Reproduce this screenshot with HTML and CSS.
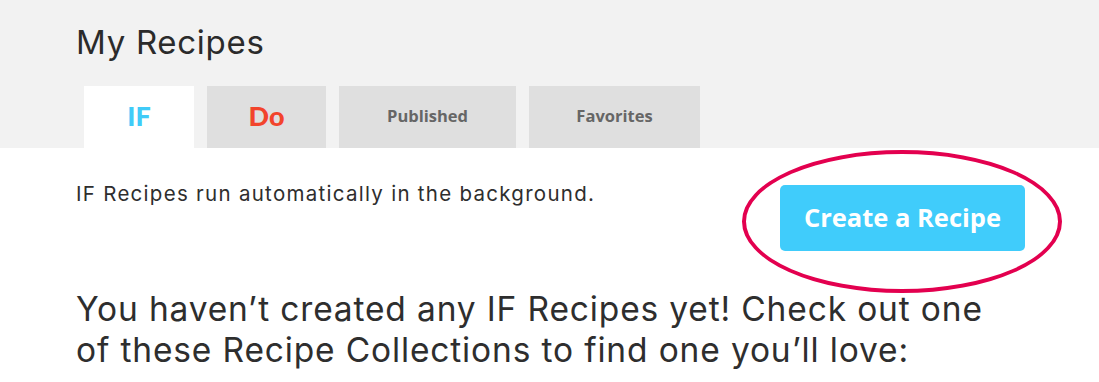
FILE: index.html
```html
<!DOCTYPE html>
<html>
<head>
<meta charset="utf-8">
<link rel="stylesheet" href="styles.css">
</head>
<body>
<header class="top">
  <h1 class="title">My Recipes</h1>
  <nav class="tabs">
    <div class="tab tab-if active">IF</div>
    <div class="tab tab-do">Do</div>
    <div class="tab tab-pub">Published</div>
    <div class="tab tab-fav">Favorites</div>
  </nav>
</header>
<main class="content">
  <div class="row">
    <p class="intro">IF Recipes run automatically in the background.</p>
    <div class="btn-wrap">
      <a class="create-btn">Create a Recipe</a>
      <span class="circle"></span>
    </div>
  </div>
  <p class="empty">You haven’t created any IF Recipes yet! Check out one of these Recipe Collections to find one you’ll love:</p>
</main>
</body>
</html>
```
FILE: styles.css
```css
* { box-sizing: border-box; }
html, body { margin: 0; padding: 0; background: #fff; }
body { font-family: Inter, Lato, sans-serif; color: #333; overflow: hidden; width: 1099px; height: 382px; }
.top { background: #f2f2f2; height: 148px; padding: 20px 0 0 76px; display: flex; flex-direction: column; }
.title { margin: 0; font-weight: 400; font-size: 33px; letter-spacing: 0.7px; line-height: 44px; color: #2b2b2b; }
.tabs { display: flex; gap: 13px; margin-top: 22px; padding-left: 8px; }
.tab { height: 62px; display: flex; align-items: center; justify-content: center; background: #dfdfdf; font-family: "Open Sans", sans-serif; font-weight: 700; font-size: 16.5px; color: #666; padding-bottom: 3px; }
.tab-if, .tab-do { font-family: Lato, sans-serif; font-weight: 900; font-size: 27px; padding-bottom: 4px; }
.tab-if { width: 110px; background: #fff; color: #40cbf8; }
.tab-do { width: 119px; color: #f2442c; }
.tab-pub { width: 177px; }
.tab-fav { width: 171px; }
.content { padding: 0 0 0 76px; }
.row { display: flex; align-items: flex-start; }
.intro { margin: 33px 0 0 0; font-size: 20.5px; letter-spacing: 1.28px; line-height: 26px; width: 704px; color: #2e2e2e; }
.btn-wrap { position: relative; margin-top: 37px; }
.create-btn { display: flex; align-items: center; justify-content: center; width: 245px; height: 66px; background: #40ccfb; color: #fff; border-radius: 5px; font-family: "Open Sans", sans-serif; font-weight: 700; font-size: 25.5px; padding-bottom: 2px; }
.circle { position: absolute; left: -38px; top: -35px; width: 320px; height: 143px; border: 4px solid #e3004f; border-radius: 50%; }
.empty { margin: 38px 0 0 0; width: 930px; font-size: 33.5px; letter-spacing: 0.85px; line-height: 41px; color: #2e2e2e; }
```
